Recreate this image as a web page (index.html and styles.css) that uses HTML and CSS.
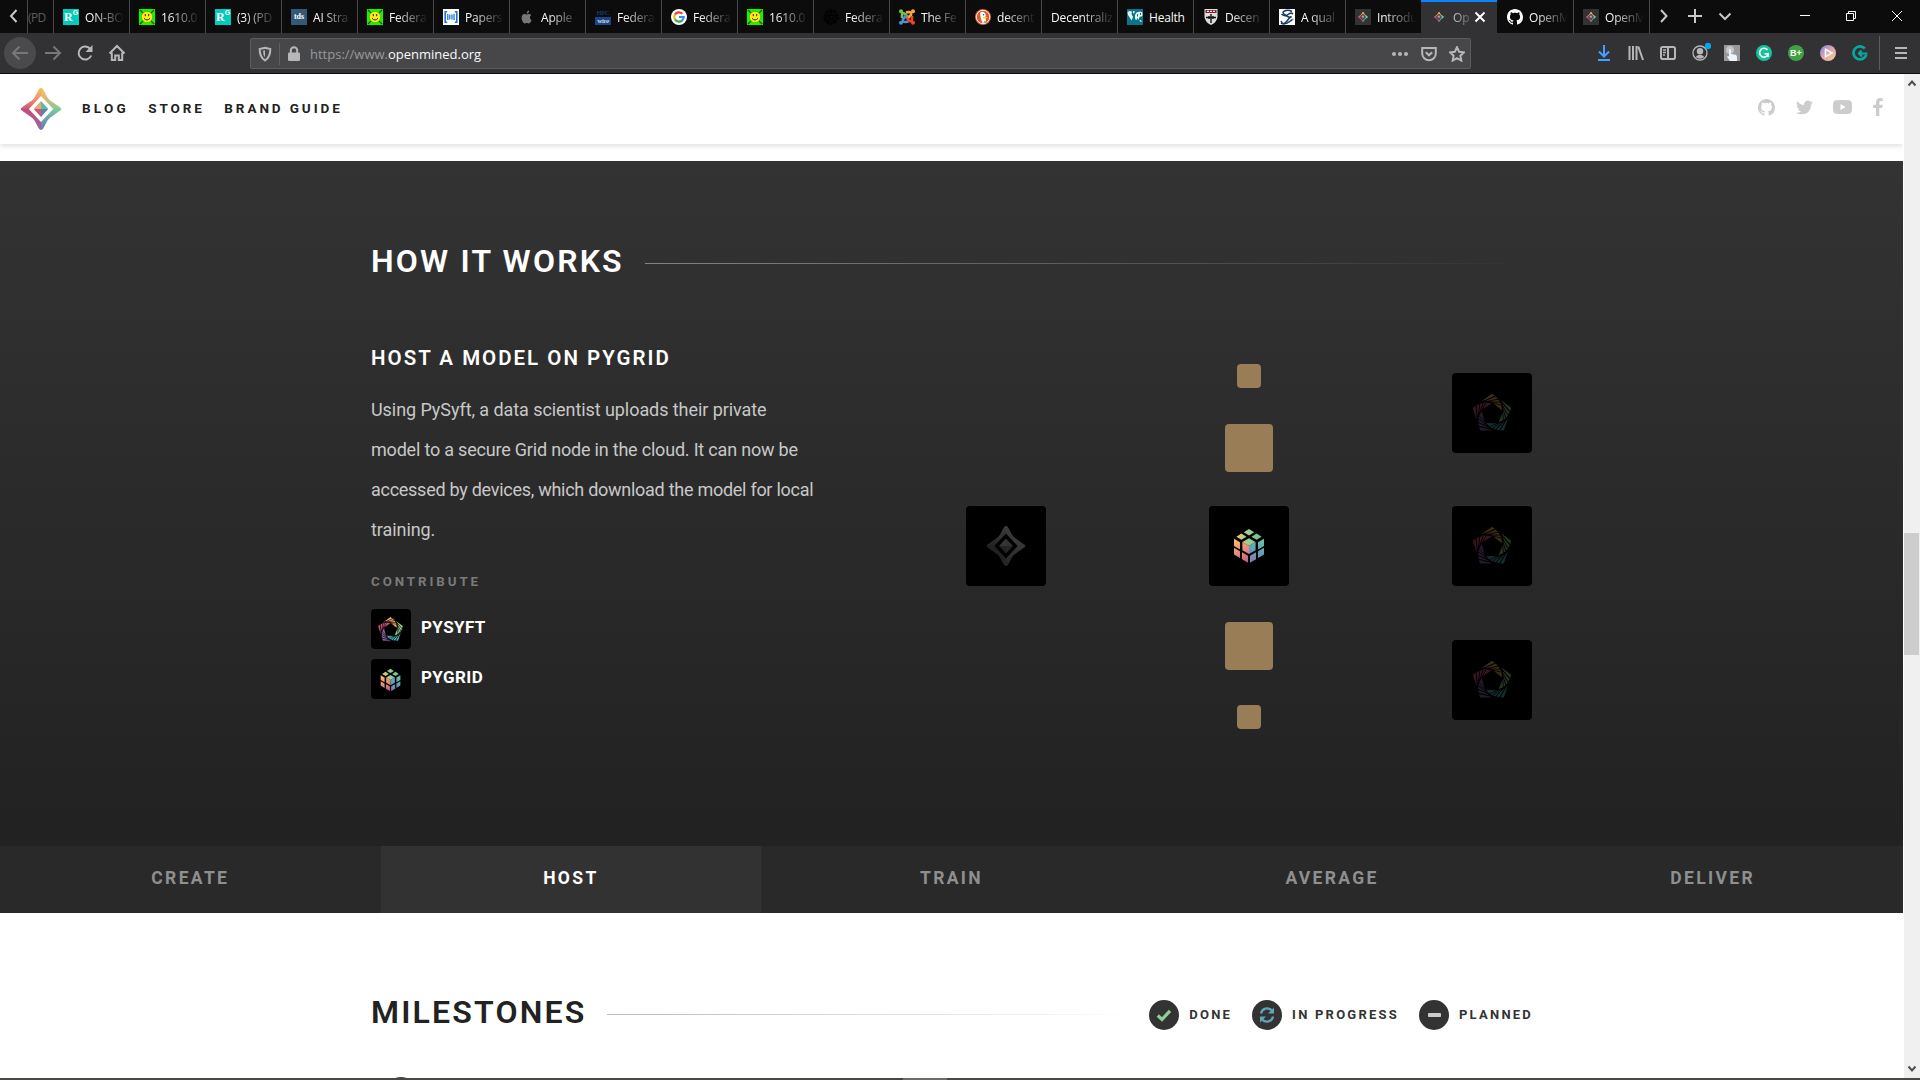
FILE: index.html
```html
<!DOCTYPE html>
<html lang="en">
<head>
<meta charset="utf-8">
<title>OpenMined</title>
<link rel="stylesheet" href="styles.css">
</head>
<body>
<svg class="defs" width="0" height="0" aria-hidden="true">
  <defs>
    <linearGradient id="tl" x1="0" y1="0" x2="0" y2="1"><stop offset="0" stop-color="#f7c25f"/><stop offset=".55" stop-color="#ec8f6c"/><stop offset="1" stop-color="#cf4f7b"/></linearGradient>
    <linearGradient id="tr" x1="0" y1="0" x2="0" y2="1"><stop offset="0" stop-color="#f7bd62"/><stop offset=".4" stop-color="#e9b873"/><stop offset="1" stop-color="#82cb98"/></linearGradient>
    <linearGradient id="bl" x1="0" y1="0" x2="0" y2="1"><stop offset="0" stop-color="#c94b78"/><stop offset="1" stop-color="#8a6fa3"/></linearGradient>
    <linearGradient id="br" x1="0" y1="0" x2="0" y2="1"><stop offset="0" stop-color="#7ccb9d"/><stop offset=".5" stop-color="#6b9fae"/><stop offset="1" stop-color="#836fa4"/></linearGradient>
    <linearGradient id="cl" gradientUnits="userSpaceOnUse" x1="-12" y1="10" x2="0" y2="34"><stop offset="0" stop-color="#fbb964"/><stop offset=".5" stop-color="#e68a7a"/><stop offset="1" stop-color="#b95789"/></linearGradient>
    <linearGradient id="cr" gradientUnits="userSpaceOnUse" x1="12" y1="10" x2="1" y2="34"><stop offset="0" stop-color="#6cc0a5"/><stop offset=".5" stop-color="#5f9fba"/><stop offset="1" stop-color="#9471a5"/></linearGradient>
    <linearGradient id="ct" gradientUnits="userSpaceOnUse" x1="-13" y1="8" x2="13" y2="8"><stop offset="0" stop-color="#f3c46c"/><stop offset=".5" stop-color="#98cd92"/><stop offset="1" stop-color="#5fbfa0"/></linearGradient>
    <clipPath id="starclip"><path d="M0-21Q1.800-21 2.800-18.600L6.200-12Q7.600-9.200 11.500-7L18.800-1.800Q21.800 0 18.800 1.800L11.500 7Q7.600 9.200 6.200 12L2.800 18.600Q1.800 21 0 21Q-1.800 21-2.800 18.600L-6.200 12Q-7.600 9.200-11.500 7L-18.800 1.800Q-21.800 0-18.800-1.800L-11.500-7Q-7.600-9.200-6.200-12L-2.800-18.600Q-1.800-21 0-21Z"/></clipPath>
    <symbol id="star" viewBox="-21 -21 42 42">
      <g clip-path="url(#starclip)"><path fill="url(#tl)" d="M-21-21H.2V.2H-21z"/><path fill="url(#tr)" d="M0-21H21V.2H0z"/><path fill="url(#bl)" d="M-21 0H.2V21H-21z"/><path fill="url(#br)" d="M0 0H21V21H0z"/></g>
      <path class="hole" d="M0-13 12.200 0 0 13-12.200 0z"/>
      <path fill="#efa76c" d="M0-8V0H-7.300z"/><path fill="#62b7a8" d="M0-8V0H7.300z"/><path fill="#c9587c" d="M0 8V0H-7.300z"/><path fill="#5d84ad" d="M0 8V0H7.300z"/>
    </symbol>
    <symbol id="cube" viewBox="-16 -1 32 36">
      <g fill="url(#ct)"><path d="M0 0 5.200 3.200 0 6.400-5.200 3.200z"/><path d="M-7.600 4.600-2.500 7.700-7.600 10.800-12.700 7.700z"/><path d="M7.600 4.600 12.700 7.700 7.600 10.800 2.500 7.700z"/><path d="M0 9.200 6.600 13.100 0 17-6.600 13.100z"/></g>
      <g fill="url(#cl)"><path d="M-15 9.800-9 13.300V20.400L-15 17z"/><path d="M-15 18.800-9 22.200V29L-15 25.500z"/><path d="M-7 23.300-1 26.700V33.800L-7 30.200z"/><path d="M-6.600 13.100 0 17V25L-6.600 21.200z"/></g>
      <g fill="url(#cr)"><path d="M15 9.800 9 13.300V20.400L15 17z"/><path d="M15 18.800 9 22.200V29L15 25.500z"/><path d="M7 23.300 1 26.700V33.800L7 30.200z"/><path d="M6.600 13.100 0 17V25L6.600 21.200z"/></g>
    </symbol>
    <g id="blade"><path d="M0-21 8-15.200-12.300-12.200z"/></g>
    <g id="arm" stroke="#000" stroke-width="1.200"><use href="#blade"/><use href="#blade" transform="rotate(12) scale(.88)"/><use href="#blade" transform="rotate(24) scale(.78)"/><use href="#blade" transform="rotate(36) scale(.7)"/><use href="#blade" transform="rotate(48) scale(.63)"/></g>
    <symbol id="penta" viewBox="-21 -22 42 42">
      <use href="#arm" fill="#f2b45e"/><use href="#arm" fill="#9dcb8d" transform="rotate(72)"/><use href="#arm" fill="#4fb0b4" transform="rotate(144)"/><use href="#arm" fill="#8d6ba4" transform="rotate(216)"/><use href="#arm" fill="#d9557c" transform="rotate(288)"/>
    </symbol>
    <symbol id="github" viewBox="0 0 16 16"><path d="M8 0C3.580 0 0 3.580 0 8c0 3.540 2.290 6.530 5.470 7.590.4.070.55-.17.55-.38 0-.19-.01-.82-.01-1.490-2.010.37-2.530-.49-2.690-.94-.09-.23-.48-.94-.82-1.130-.28-.15-.68-.52-.01-.53.63-.01 1.080.58 1.230.82.72 1.210 1.870.87 2.330.66.070-.52.28-.87.51-1.070-1.780-.2-3.640-.89-3.640-3.950 0-.87.31-1.590.82-2.150-.08-.2-.36-1.020.08-2.120 0 0 .67-.21 2.200.82.64-.18 1.320-.27 2-.27s1.360.09 2 .27c1.530-1.040 2.200-.82 2.200-.82.44 1.100.16 1.920.08 2.120.51.56.82 1.270.82 2.150 0 3.070-1.870 3.750-3.650 3.950.29.25.54.73.54 1.480 0 1.070-.01 1.930-.01 2.200 0 .21.15.46.55.38A8.010 8.010 0 0 0 16 8c0-4.420-3.580-8-8-8z"/></symbol>
    <symbol id="smile" viewBox="0 0 16 16"><path fill="#0f0" d="M0 0h16v16H0z"/><path stroke="#5a3a10" stroke-width="1.200" d="M1 1l14 14M15 1 1 15"/><circle cx="8" cy="8" r="5.600" fill="#ffeb1a" stroke="#8a7a00" stroke-width=".5"/><path stroke="#222" fill="none" stroke-width="1" d="M6.300 5v2.200M9.700 5v2.200M5 9.300q3 3.400 6 0"/></symbol>
    <symbol id="omfav" viewBox="0 0 16 16"><path fill="#333" d="M0 0h16v16H0z"/><use class="dark" href="#star" x="2.800" y="2.800" width="10.400" height="10.400"/></symbol>
  </defs>
</svg>

<div class="tabbar">
  <div class="scroll-left"><svg width="14" height="14" viewBox="0 0 14 14"><path d="M10.500 1 5 7 10.500 13"/></svg></div>
  <div class="tab partial"><span class="title">(PD</span></div>
  <div class="tab"><span class="fav rg">R<sup>G</sup></span><span class="title">ON-BO</span></div>
  <div class="tab"><svg class="fav"><use href="#smile"/></svg><span class="title">1610.0</span></div>
  <div class="tab"><span class="fav rg">R<sup>G</sup></span><span class="title">(3) (PD</span></div>
  <div class="tab"><span class="fav tds">tds</span><span class="title">AI Stra</span></div>
  <div class="tab"><svg class="fav"><use href="#smile"/></svg><span class="title">Federa</span></div>
  <div class="tab"><svg class="fav" viewBox="0 0 16 16"><path fill="#fff" d="M0 0h16v16H0z"/><path fill="none" stroke="#1c74d4" stroke-width="1.600" d="M4.200 2.800H2.200v10.400h2M11.800 2.800h2v10.400h-2"/><path fill="#3b8ce4" d="M4 5h1.500v6H4zM6 5.500h1.500v5H6zM8.200 5.500h1.500v5H8.200zM10.300 5h1.500v6h-1.500z"/></svg><span class="title">Papers</span></div>
  <div class="tab"><svg class="fav" viewBox="0 0 16 16"><path fill="#777" d="M11 8.400c0-1.500 1.200-2.200 1.300-2.300-.8-1.100-1.900-1.200-2.300-1.200-1 0-1.800.6-2.300.6S6.400 5 5.600 5C3.800 5 2.600 6.600 2.600 8.800c0 2.600 1.700 5.700 3.100 5.700.8 0 1.100-.5 2.100-.5s1.300.5 2.100.5c1.300 0 2.400-2.300 2.700-3.400-1-.5-1.600-1.400-1.600-2.700zM9.300 3.900c.6-.7.9-1.600.8-2.500-.9.1-2.500 1-2.400 3.100.6 0 1.200-.2 1.600-.6z"/></svg><span class="title">Apple</span></div>
  <div class="tab"><span class="fav hpc"><b>HPC</b><i>wire</i></span><span class="title">Federa</span></div>
  <div class="tab"><svg class="fav" viewBox="0 0 16 16"><circle cx="8" cy="8" r="8" fill="#fff"/><g fill="none" stroke-width="2.200"><path stroke="#ea4335" d="M4 5.600A4.700 4.700 0 0 1 11.400 4.700"/><path stroke="#fbbc05" d="M4.100 10.500a4.700 4.700 0 0 1 0-5"/><path stroke="#34a853" d="M11.200 11.400A4.700 4.700 0 0 1 4 10.400"/><path stroke="#4285f4" d="M8 8h4.700a4.600 4.600 0 0 1-1.600 3.500"/></g></svg><span class="title">Federa</span></div>
  <div class="tab"><svg class="fav"><use href="#smile"/></svg><span class="title">1610.0</span></div>
  <div class="tab"><svg class="fav" viewBox="0 0 16 16"><g fill="none" stroke="#000" stroke-width="1"><circle cx="8" cy="8" r="6.800" stroke-width="1.800" stroke-dasharray="3.300 1"/><path d="M8 2l5.500 4.500-2 6.500h-7l-2-6.500zM3 6.500h10L5 13 8 2l3.500 11z"/></g></svg><span class="title">Federa</span></div>
  <div class="tab"><svg class="fav" viewBox="0 0 16 16"><g fill="none" stroke-width="2.600"><path stroke="#7ac143" d="M3 9V5.500Q3 3 5.500 4.500L9 8"/><path stroke="#f9a541" d="M7 3.500 9.500 3Q13 3 12 6L8 10"/><path stroke="#f44321" d="M13 7v3.500q0 2.500-2.500 1.500L7 8"/><path stroke="#5091cd" d="M9.500 12.500 6.500 13Q3 13 4 10L8 6"/></g><circle cx="2" cy="2.200" r="2" fill="#7ac143"/><circle cx="14" cy="2.200" r="2" fill="#f9a541"/><circle cx="14" cy="13.800" r="2" fill="#f44321"/><circle cx="2" cy="13.800" r="2" fill="#5091cd"/></svg><span class="title">The Fe</span></div>
  <div class="tab"><svg class="fav" viewBox="0 0 16 16"><circle cx="8" cy="8" r="8" fill="#de5833"/><circle cx="8" cy="8" r="6.700" fill="none" stroke="#fff" stroke-width=".9"/><path fill="#fff" d="M5 4q3-2.500 5.300.5.800 1.500.2 4L11 13l-3.500 1Q5 8 5 4z"/><path fill="#fdd20a" d="M8 8.200q3-1 4.500 0-2 1.500-4.500 1.300z"/><path fill="#65bc46" d="M9 12l3 .5-.5 1.500-2.500-.5z"/><circle cx="8.500" cy="5.800" r=".8" fill="#2d4f8e"/></svg><span class="title">decent</span></div>
  <div class="tab"><span class="title noicon">Decentraliz</span></div>
  <div class="tab"><svg class="fav" viewBox="0 0 16 16"><path fill="#0a7587" d="M0 0h16v16H0z"/><path fill="#e8f4f6" d="M.5 3l2-1 2.500.5-.5 2.500L6 8l-1.500 3.500L3 9 1 6zM6 2l2 .5-1 2L6 4zM8 6l1.500-2.500L13 2.500l2.500 1v3.500l-3 1-1 3L10.500 9 9 11.500 8 9zM12 12l2-1 1 2z"/><path fill="#0a7587" d="M2 4l1.500 1.500M10 5h1v2.500h-1zM13 4h1v2h-1z"/></svg><span class="title bright">Health</span></div>
  <div class="tab"><svg class="fav" viewBox="0 0 16 16"><path fill="#ddd" d="M1.500 0h13v8q-.5 5-6.500 8-6-3-6.500-8z"/><path fill="#8c1f30" d="M2.500 1h11v3h-11z"/><path fill="#eee" d="M4 1.700h2v1.300H4zM7 1.700h2v1.300H7zM10 1.700h2v1.300h-2z"/><path fill="none" stroke="#111" stroke-width="1.400" d="M8 5v9M3 8.500h10M6 7v3M10 7v3"/></svg><span class="title">Decen</span></div>
  <div class="tab"><svg class="fav" viewBox="0 0 16 16"><path fill="#fff" d="M0 0h16v16H0z"/><g fill="none" stroke="#173a63" stroke-width="1.500"><path d="M13 2.500Q9 .5 5.500 2T7 6.500t5 1.500-4 4-6 0"/><path d="M2.500 5Q6 8 9 5.500t5-.5M2 14q4 2 8-1t4-2.500"/></g></svg><span class="title">A qual</span></div>
  <div class="tab"><svg class="fav"><use href="#omfav"/></svg><span class="title">Introdu</span></div>
  <div class="tab active"><svg class="fav"><use href="#omfav"/></svg><span class="title">Op</span><svg class="x" width="12" height="12" viewBox="0 0 12 12"><path d="M1.500 1.500l9 9M10.500 1.500l-9 9"/></svg></div>
  <div class="tab after"><svg class="fav white"><use href="#github"/></svg><span class="title">OpenM</span></div>
  <div class="tab"><svg class="fav"><use href="#omfav"/></svg><span class="title">OpenM</span></div>
  <div class="tabctl">
    <svg width="14" height="14" viewBox="0 0 14 14"><path d="M4 1l5.500 6L4 13"/></svg>
    <svg width="14" height="14" viewBox="0 0 14 14"><path d="M7 0v14M0 7h14"/></svg>
    <svg width="14" height="14" viewBox="0 0 14 14"><path d="M1.500 4.500 7 10l5.500-5.500"/></svg>
  </div>
  <div class="winctl">
    <svg width="12" height="12" viewBox="0 0 12 12"><path d="M1 5.500h10"/></svg>
    <svg width="12" height="12" viewBox="0 0 12 12"><path d="M1.500 3.500h7v7h-7zM3.500 3.500v-2h7v7h-2"/></svg>
    <svg width="12" height="12" viewBox="0 0 12 12"><path d="M1 1l10 10M11 1 1 11"/></svg>
  </div>
</div>

<div class="toolbar">
  <div class="navbtns">
    <span class="back"><svg width="18" height="18" viewBox="0 0 18 18"><path d="M17 9H2M8.500 2.500 2 9l6.500 6.500"/></svg></span>
    <svg class="dim" width="18" height="18" viewBox="0 0 18 18"><path d="M1 9h15M9.500 2.500 16 9l-6.500 6.500"/></svg>
    <svg width="18" height="18" viewBox="0 0 18 18"><path d="M15.200 11.500A6.500 6.500 0 1 1 13.800 4.500" /><path class="solid" d="M16.500 1v7h-7z"/></svg>
    <svg width="18" height="18" viewBox="0 0 18 18"><path d="M1.500 9.500 9 2l7.500 7.500M3.800 8.500V16h3.400v-4.500h3.600V16h3.400V8.500"/></svg>
  </div>
  <div class="urlbar">
    <svg width="16" height="16" viewBox="0 0 16 16"><path d="M8 1.800 13.300 3q.2 8-5.300 11.500Q2.500 11 2.700 3z"/><path class="solid" d="M8 4.300 6 4.800q0 4.500 2 6.500z"/></svg>
    <i class="vline"></i>
    <svg class="lock" width="14" height="16" viewBox="0 0 14 16"><path d="M3.800 7V4.500a3.200 3.200 0 0 1 6.400 0V7"/><rect class="solid" x="1" y="6.500" width="12" height="8.500" rx="1.200"/></svg>
    <span class="url"><span>https://www.</span>openmined.org</span>
    <span class="urlicons">
      <svg width="18" height="16" viewBox="0 0 18 16"><g class="solid"><circle cx="3" cy="8" r="2"/><circle cx="9" cy="8" r="2"/><circle cx="15" cy="8" r="2"/></g></svg>
      <svg width="16" height="16" viewBox="0 0 16 16"><path d="M1.200 2h13.600v5.500a6.800 6.800 0 0 1-13.600 0zM4.800 6.200 8 9.300l3.200-3.100"/></svg>
      <svg width="16" height="16" viewBox="0 0 16 16"><path d="M8 1.200l2.100 4.500 4.900.6-3.600 3.400.9 4.900L8 12.200l-4.300 2.400.9-4.900L1 6.300l4.900-.6z"/></svg>
    </span>
  </div>
  <div class="ext">
    <svg class="blue" width="16" height="16" viewBox="0 0 16 16"><path d="M8 0v11M3 6.500l5 5 5-5M2 15h12"/></svg>
    <svg width="16" height="16" viewBox="0 0 16 16"><path d="M1.500 1v14M5 1v14M8.500 1v14M10.300 1.500 15 15"/></svg>
    <svg width="16" height="16" viewBox="0 0 16 16"><rect x="1" y="2" width="14" height="12" rx="1.800"/><path d="M8 2v12"/><path class="thin" d="M3 5h3M3 7.500h3M3 10h2"/></svg>
    <svg class="account" width="22" height="22" viewBox="0 0 22 22"><circle class="thin" cx="11" cy="11" r="7"/><g class="solid"><circle cx="11" cy="9.200" r="3.200"/><path d="M6.500 15q4.500-4.500 9 0-4.500 3.500-9 0z"/></g><circle cx="19" cy="4" r="3.200" fill="#00a8f3" class="nostroke"/></svg>
    <svg width="16" height="16" viewBox="0 0 16 16"><path class="nostroke" fill="#999" d="M0 0h16v16H0z"/><circle class="nostroke" fill="#c4c4c4" cx="6" cy="5" r="4"/><path class="nostroke" fill="#eef4fb" d="M5 4.500q1.300-1 2 .5v4l5 .8 1 2V16H6l-3-4.500q1-1 2 0z"/></svg>
    <svg width="16" height="16" viewBox="0 0 16 16"><circle class="nostroke" cx="8" cy="8" r="8" fill="#15c39a"/><path stroke="#fff" stroke-width="1.600" d="M11.500 5A4.400 4.400 0 1 0 12 9.500M8.500 8.800H12V12"/></svg>
    <span class="bplus">B+</span>
    <svg width="16" height="16" viewBox="0 0 16 16"><defs><linearGradient id="pl" x2="1" y2="1"><stop stop-color="#6f86d8"/><stop offset=".45" stop-color="#d9a3b4"/><stop offset="1" stop-color="#ffd08a"/></linearGradient></defs><circle class="nostroke" cx="8" cy="8" r="8" fill="url(#pl)"/><path stroke="#fff" stroke-width="1.500" d="M5.500 4.200 12 8l-6.500 3.800z"/></svg>
    <svg width="16" height="16" viewBox="0 0 16 16"><path stroke="#06a99c" stroke-width="2.700" d="M12.800 3.500A6.500 6.500 0 1 0 14.300 9.500"/><path stroke="#06a99c" stroke-width="2.200" d="M7 8.500h8.500M9.500 5.500 7 8.500l3 3"/></svg>
  </div>
  <div class="menu"><svg width="14" height="14" viewBox="0 0 14 14"><path d="M1 2h12M1 7h12M1 12h12"/></svg></div>
</div>

<div class="viewport">
  <div class="page">
    <header class="site">
      <svg class="logo"><use href="#star"/></svg>
      <nav><a>BLOG</a><a>STORE</a><a>BRAND GUIDE</a></nav>
      <div class="social">
        <svg width="17" height="17"><use href="#github"/></svg>
        <svg width="17" height="15" viewBox="0 0 17 14"><path d="M17 1.700q-.9.400-2 .5Q16.200 1.500 16.500.3q-1 .6-2.200.9A3.500 3.500 0 0 0 8.300 4.400Q3.800 4.200 1.200.7-.2 3.500 2.300 5.300q-.9 0-1.600-.4Q.8 7.600 3.500 8.300q-.8.200-1.600.1.800 2.200 3.300 2.400Q2.900 12.600 0 12.300 2.400 13.800 5.300 13.800q9.700-.3 10-10.400Q16.300 2.700 17 1.700z"/></svg>
        <svg width="19" height="14" viewBox="0 0 19 14"><path fill-rule="evenodd" d="M3 .3Q9.500-.3 16 .3q2.500.2 2.800 2.700.4 4 0 8-.3 2.500-2.800 2.700-6.500.6-13 0Q.5 13.500.2 11q-.4-4 0-8Q.5.500 3 .3zM7.500 4v6l5.200-3z"/></svg>
        <svg width="10" height="18" viewBox="0 0 10 18"><path d="M3 18v-8H0V6.700h3V4.300Q3.100.2 7 0q1.500 0 2.800.2V3H8.200Q6.400 3 6.300 4.700v2h3.400L9.200 10H6.300v8z"/></svg>
      </div>
    </header>

    <section class="how">
      <div class="container">
        <div class="headline"><h2>HOW IT WORKS</h2><i class="rule"></i></div>
        <div class="split">
          <div class="copy">
            <h3>HOST A MODEL ON PYGRID</h3>
            <p><span class="loose">Using PySyft, a data scientist uploads their private</span><br>model to a secure Grid node in the cloud. It can now be<br><span class="tight">accessed by devices, which download the model for local</span><br><span class="loose">training.</span></p>
            <h4>CONTRIBUTE</h4>
            <a class="repo"><span><svg width="27" height="27"><use href="#penta"/></svg></span>PYSYFT</a>
            <a class="repo"><span><svg width="21" height="24"><use href="#cube"/></svg></span>PYGRID</a>
          </div>
          <div class="diagram">
            <div class="col"><div class="node gray"><svg width="40" height="40"><use href="#star"/></svg></div></div>
            <div class="col mid">
              <i class="sq small"></i><i class="sq"></i>
              <div class="node"><svg width="32" height="36"><use href="#cube"/></svg></div>
              <i class="sq"></i><i class="sq small"></i>
            </div>
            <div class="col right">
              <div class="node faint"><svg width="42" height="42"><use href="#penta"/></svg></div>
              <div class="node faint"><svg width="42" height="42"><use href="#penta"/></svg></div>
              <div class="node faint"><svg width="42" height="42"><use href="#penta"/></svg></div>
            </div>
          </div>
        </div>
      </div>
      <div class="steps"><a>CREATE</a><a class="on">HOST</a><a>TRAIN</a><a>AVERAGE</a><a>DELIVER</a></div>
    </section>

    <section class="milestones container">
      <div class="headline"><h2>MILESTONES</h2><i class="rule"></i>
        <div class="legend">
          <span><svg width="30" height="30" viewBox="0 0 30 30"><circle cx="15" cy="15" r="15"/><path stroke="#90cf96" stroke-width="3.200" d="M8.800 15.500l4.200 4 8-8.700"/></svg>DONE</span>
          <span><svg width="30" height="30" viewBox="0 0 30 30"><circle cx="15" cy="15" r="15"/><g stroke="#5fa5b5" stroke-width="2.300"><path d="M9 13.500a6.200 6.200 0 0 1 10.800-3M21 16.500a6.200 6.200 0 0 1-10.800 3"/></g><path fill="#5fa5b5" d="M22 7.500v6h-6zM8 22.500v-6h6z"/></svg>IN PROGRESS</span>
          <span><svg width="30" height="30" viewBox="0 0 30 30"><circle cx="15" cy="15" r="15"/><rect x="9" y="13" width="13" height="4" rx=".8" fill="#ccc"/></svg>PLANNED</span>
        </div>
      </div>
      <i class="peek"></i>
    </section>
  </div>
  <div class="scrollbar">
    <svg width="10" height="8" viewBox="0 0 10 8"><path d="M1.500 6.500 5 2.500l3.500 4"/></svg>
    <i class="thumb"></i>
    <svg width="10" height="8" viewBox="0 0 10 8"><path d="M1.500 1.500 5 5.500l3.500-4"/></svg>
  </div>
</div>
<div class="taskbar"><i></i></div>
</body>
</html>
```
FILE: styles.css
```css
*{box-sizing:border-box}
body{margin:0;width:1920px;height:1080px;overflow:hidden;display:flex;flex-direction:column;background:#fff;font-family:Roboto,"Liberation Sans",sans-serif}
svg{display:block;flex:none}
i{display:block;font-style:normal}
h2,h3,h4,p{margin:0}
.defs{position:absolute}

/* browser tab strip */
.tabbar{height:33px;flex:none;background:#0c0c0d;display:flex;font:12px "Open Sans","Noto Sans",sans-serif;color:#f9f9fa}
.scroll-left{width:27px;flex:none;display:flex;align-items:center;padding-left:6px}
.tab{width:76px;flex:none;border-left:1px solid #4a4a4c;display:flex;align-items:center;padding:2px 0 0 9px}
.tab.partial{width:26px;padding:2px 0 0}
.fav{width:16px;height:16px;margin-right:6px;flex:none;margin-top:-1px}
.title{white-space:nowrap;line-height:20px;letter-spacing:-.2px;-webkit-mask-image:linear-gradient(90deg,#000 7px,transparent 39px);mask-image:linear-gradient(90deg,#000 7px,transparent 39px)}
.title.noicon{letter-spacing:-.1px;-webkit-mask-image:linear-gradient(90deg,#000 30px,transparent 64px);mask-image:linear-gradient(90deg,#000 30px,transparent 64px)}
.title.bright{-webkit-mask-image:none;mask-image:none}
.partial .title{-webkit-mask-image:none;mask-image:none;color:#5c5c5e;letter-spacing:-.6px}
.tab.active{background:#323234;border-left:0;padding-left:10px;box-shadow:inset 0 2px #0a84ff}
.tab.active .title{opacity:.75;margin-right:5px;width:16px;-webkit-mask-image:linear-gradient(90deg,#000,rgba(0,0,0,.3));mask-image:linear-gradient(90deg,#000,rgba(0,0,0,.3))}
.tab.after{border-left:0;padding-left:10px}
.white{fill:#fff}
.rg{background:#00ccbb;color:#fff;font:700 12px/17px "Liberation Serif",serif;padding-left:1px;white-space:nowrap}
.rg sup{font:700 7px/7px "Liberation Sans",sans-serif;vertical-align:6px}
.tds{background:#355876;color:#fff;font:700 8px/15px "Liberation Serif",serif;text-align:center}
.hpc{display:flex;flex-direction:column;font:7px/8px "Liberation Serif",serif;text-align:center;letter-spacing:-.2px}
.hpc b{color:#1c4587;font-weight:400}
.hpc i{background:#1c4587;color:#fff}
.scroll-left svg,.tabctl svg,.x{fill:none;stroke:#c8c8ca;stroke-width:2}
.scroll-left svg,.tabctl svg,.winctl svg,.x{margin-top:-1px}
.x{stroke:#fff;margin-top:-2px}
.tabctl{border-left:1px solid #4a4a4c;display:flex;align-items:center;padding-left:7px;gap:16.500px}
.winctl{margin-left:auto;padding-right:17px;display:flex;align-items:center;gap:34px}
.winctl svg{fill:none;stroke:#fff;stroke-width:1}

/* browser toolbar */
.toolbar{height:41px;flex:none;background:#323234;border-bottom:1px solid #0c0c0d;display:flex;align-items:center}
.toolbar svg{fill:none;stroke:#b7b7b9;stroke-width:2}
.toolbar .solid{fill:#b7b7b9;stroke:none}
.toolbar .thin{stroke-width:1.300}
.toolbar .nostroke{stroke:none}
.navbtns{width:250px;flex:none;display:flex;align-items:center;gap:14px;padding-left:4px}
.back{width:32px;height:32px;border-radius:50%;background:#4a4a4c;display:flex;align-items:center;justify-content:center;margin-right:-6px}
.toolbar .back svg,.toolbar .dim{stroke:#77777a}
.urlbar{width:1221px;height:31px;margin-top:1px;flex:none;background:#474749;border:1px solid #5c5c5f;border-radius:2px;display:flex;align-items:center;padding:0 5px 0 6px}
.vline{width:1px;height:22px;background:#606063;margin:0 7px 0 6px}
.lock{margin:0 9px 0 0}
.url{font:13px/20px "Open Sans",sans-serif;color:#f9f9fa;padding-top:1px}
.url span{color:#98989a}
.urlicons{margin-left:auto;display:flex;gap:12px}
.ext{margin-left:125px;display:flex;align-items:center;gap:16px}
.toolbar .blue{stroke:#45a1ff}
.account{margin:0 -3px}
.bplus{width:16px;height:16px;border-radius:50%;background:#3fa142;color:#fff;font:700 9px/16px "Liberation Sans",sans-serif;text-align:center}
.menu{margin-left:11px;border-left:1px solid #5c5c5f;height:34px;display:flex;align-items:center;padding-left:14px}

/* page viewport */
.viewport{height:1004px;flex:none;display:flex}
.page{width:1903px;height:1005px;overflow:hidden;flex:none}
.container{width:1161px;margin:0 auto}
.site{height:70px;display:flex;align-items:center;padding:0 20.500px 0 20px;box-shadow:0 2px 5px rgba(0,0,0,.13)}
.logo{width:42px;height:42px}
.hole{fill:var(--hole,#fff)}
.gray{--hole:#000}
.dark{--hole:#333}
.site nav{display:flex;gap:19.500px;margin:-2px 0 0 20px;font-weight:700;font-size:13.500px;letter-spacing:2.900px;color:#222;white-space:nowrap}
.site nav a:first-child{letter-spacing:3.200px}
.social{margin-left:auto;display:flex;align-items:center;gap:20.500px;fill:#ccc;margin-top:-4px}

.how{margin-top:17px;height:752px;background:linear-gradient(#333,#222 90%);display:flex;flex-direction:column}
.how .container{height:685px;padding-top:77px}
.headline{display:flex;align-items:center}
.headline h2{font-weight:600;font-size:32px;line-height:46px;letter-spacing:2.180px;color:#222;white-space:nowrap}
.rule{height:1px;flex:1;margin:4px 0 0 21px;background:linear-gradient(90deg,#bbb,transparent)}
.how h2{color:#fff}
.how .rule{background:linear-gradient(90deg,#838383,transparent)}
.split{display:flex;justify-content:space-between;margin-top:56px}
.copy{padding-top:2px}
.copy h3{font-weight:600;font-size:20.500px;line-height:32px;letter-spacing:2px;color:#fff;white-space:nowrap}
.copy p{font-size:18px;line-height:40px;letter-spacing:-.2px;color:#c8c8c8;margin-top:16px;white-space:nowrap}
.copy .loose{letter-spacing:-.07px}
.copy .tight{letter-spacing:-.27px}
.copy h4{font-weight:700;font-size:13.300px;line-height:20px;letter-spacing:2.930px;color:#7a7a7a;margin:22px 0 17px}
.repo{display:flex;align-items:center;gap:10px;height:40px;color:#fff;font-weight:700;font-size:17px;letter-spacing:.4px;line-height:20px;padding-bottom:4px;margin-bottom:10px}
.repo span{width:40px;height:40px;margin-bottom:-4px;border-radius:4px;background:#000;display:flex;align-items:center;justify-content:center}
.repo svg{margin-top:1px;margin-right:1px}
.diagram{width:566px;display:flex;justify-content:space-between}
.col{display:flex;flex-direction:column;align-items:center;justify-content:center;height:364px;margin-top:24px}
.mid,.right{justify-content:space-between}
.mid{height:365px}
.mid .node{margin-top:-1px}
.right{height:347px;margin-top:33px}
.right .node:nth-child(2){margin-top:-1px}
.node{width:80px;height:80px;border-radius:4px;background:#000;display:flex;align-items:center;justify-content:center}
.gray svg{filter:grayscale(1) brightness(.3)}
.faint svg{opacity:.25}
.sq{width:48px;height:48px;border-radius:4px;background:#997d56}
.small{width:24px;height:24px}
.steps{display:flex;height:67px}
.steps a{flex:1;background:rgba(255,255,255,.035);color:#8f8f8f;font-weight:700;font-size:17.500px;line-height:65px;letter-spacing:2.350px;text-align:center}
.steps .on{background:#323232;color:#fff}

.milestones{padding-top:76px}
.legend{display:flex;margin:5px 1px 0 10px;gap:22px;font-weight:700;font-size:13px;letter-spacing:2.230px;color:#333}
.legend span{display:flex;align-items:center;gap:10px;white-space:nowrap;margin-right:-2px}
.legend svg{fill:none}
.legend circle{fill:#333}
.peek{width:30px;height:30px;border-radius:50%;background:#333;margin:42px 0 0 15px}

.scrollbar{width:16px;margin-left:1px;background:#f0f0f0;display:flex;flex-direction:column;align-items:center}
.scrollbar svg{fill:none;stroke:#505050;stroke-width:2;margin:5px 0}
.thumb{width:15px;height:122px;background:#cdcdcd;margin:441px 1px auto 0}
.taskbar{height:2px;background:#484846}
.taskbar i{width:44px;height:2px;margin-left:903px;background:#6c6c69}
```
